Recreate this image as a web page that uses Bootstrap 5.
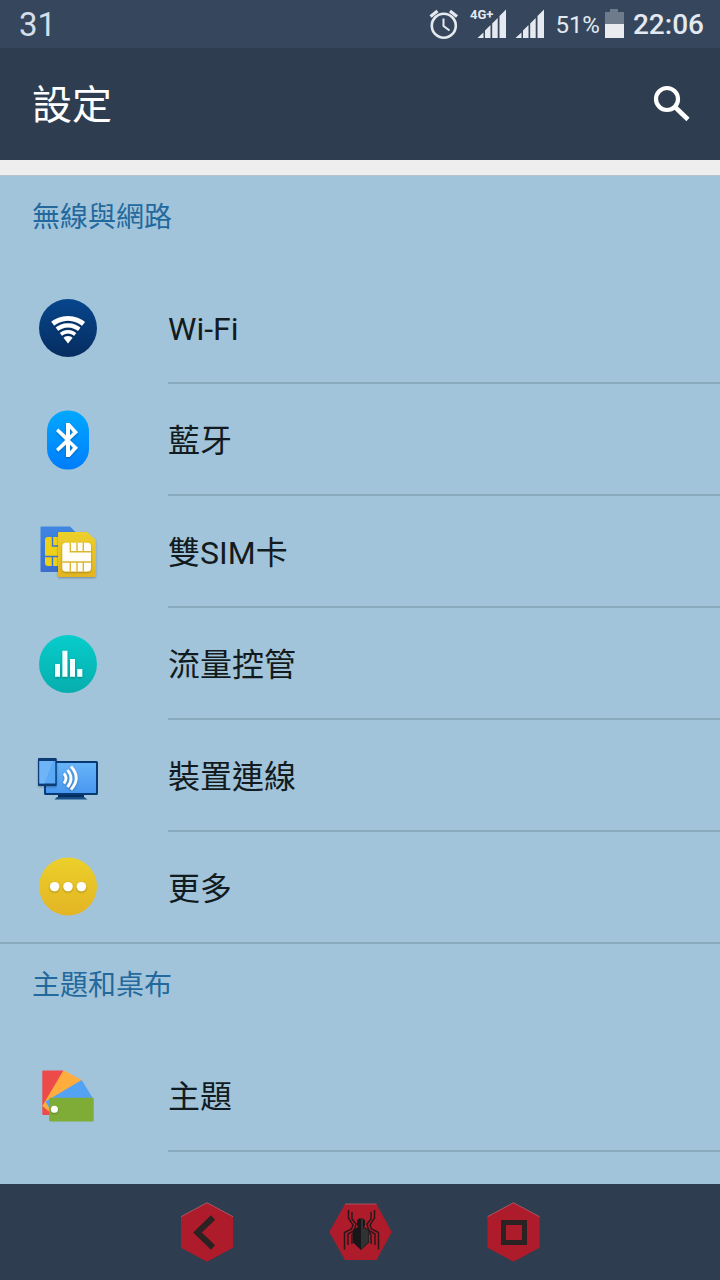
<!DOCTYPE html>
<html lang="zh-Hant">
<head>
<meta charset="utf-8">
<meta name="viewport" content="width=device-width, initial-scale=1">
<title>設定</title>
<link href="https://cdn.jsdelivr.net/npm/bootstrap@5.3.0/dist/css/bootstrap.min.css" rel="stylesheet">
<style>
  body { font-family: Roboto, "Noto Sans CJK TC", sans-serif; background: #a2c4da; color: #121b20; }
  .status-bar { height: 48px; background: #36475d; color: #e3e9f0; padding: 0 16px 0 19px; line-height: 46px; }
  .status-bar span { padding-top: 2px; }
  .status-date { font-size: 33px; color: #d5dee9; }
  .status-percent { font-size: 24px; margin-left: 10px; margin-right: 5px; }
  .status-time { font-size: 28px; font-weight: 500; margin-left: 8px; }
  .app-bar { height: 112px; background: #2e3d4f; color: #fff; padding: 0 24px 0 32px; }
  .app-bar h1 { font-size: 40px; line-height: 48px; font-weight: 400; padding-top: 4px; }
  .top-strip { height: 16px; background: #eee; border-bottom: 1px solid #b9c3c9; }
  .section-title { height: 96px; padding: 22px 32px 0; font-size: 28px; line-height: 40px; font-weight: 400; color: #23699d; }
  .setting-row { height: 112px; padding-left: 36px; gap: 68px; color: inherit; font-size: 32px; line-height: 48px; }
  .setting-label { height: 112px; padding-top: 4px; border-bottom: 2px solid #8aabbd; }
  .section-block + .section-block { border-top: 2px solid #8aabbd; }
  .section-block:not(:last-child) > a:last-child,
  .section-block:not(:last-child) > a:last-child .setting-label { height: 110px; border-bottom: 0; }
  .nav-keys { height: 96px; gap: 90px; background: #2e3d4f; }
</style>
</head>
<body class="min-vh-100 d-flex flex-column">
<svg width="0" height="0" class="position-absolute" aria-hidden="true">
  <defs>
    <linearGradient id="navy" x2="0" y2="1"><stop stop-color="#07468c"/><stop offset="1" stop-color="#062d60"/></linearGradient>
    <linearGradient id="azure" x2="0" y2="1"><stop stop-color="#00a8ff"/><stop offset="1" stop-color="#007dfc"/></linearGradient>
    <linearGradient id="gold" x2="0" y2="1"><stop stop-color="#ecd02b"/><stop offset="1" stop-color="#e3b423"/></linearGradient>
    <linearGradient id="teal" x2="0" y2="1"><stop stop-color="#07cdcb"/><stop offset="1" stop-color="#06aead"/></linearGradient>
    <linearGradient id="screen" x2="0" y2="1"><stop stop-color="#69b5f8"/><stop offset="1" stop-color="#4797f0"/></linearGradient>
    <linearGradient id="simblue" x2="0" y2="1"><stop stop-color="#3f86e2"/><stop offset="1" stop-color="#3a6fce"/></linearGradient>
    <filter id="drop" x="-30%" y="-30%" width="160%" height="160%"><feDropShadow dx="0" dy="1" stdDeviation="1" flood-opacity=".3"/></filter>
    <clipPath id="fan"><path d="M32 47.500 14.500 24.700 14 14H50V24.700Z"/></clipPath>
  </defs>
</svg>

<div class="status-bar d-flex align-items-center justify-content-between">
  <span class="status-date">31</span>
  <div class="d-flex align-items-center">
    <svg width="120" height="48" viewBox="426 0 120 48" role="img" aria-label="鬧鐘、4G+ 訊號">
      <g fill="none" stroke="#e6eaf0" stroke-width="2.600"><circle cx="444.800" cy="25.700" r="12"/><path d="M444.500 18.500V26l6 4.500" stroke-width="2"/><path d="m431.500 16.500 7-5.500m19.500 5.500-7-5.500" stroke-width="3.200"/></g>
      <path fill="#e6eaf0" d="M478.500 38l6-5.500V38zM486 38v-7.500l5.500-5.500V38zM493.200 38V23.500l5.500-5.500V38zM500.500 38V16l6.500-6.500V38zM516.500 38l6-5.500V38zM524 38v-7.500l5.500-5.500V38zM531.200 38V23.500l5.500-5.500V38zM538.500 38V16l6.500-6.500V38z"/>
      <text x="471" y="18.500" fill="#e6eaf0" font-family="Roboto, sans-serif" font-weight="700" font-size="13">4G+</text>
    </svg>
    <span class="status-percent">51%</span>
    <svg width="20" height="48" viewBox="0 0 20 48" role="img" aria-label="電池"><path fill="#6d7b8a" d="M0 12h5V9h8v3h6v12H0z"/><path fill="#e9ebee" d="M0 24h19v14H0z"/></svg>
    <span class="status-time">22:06</span>
  </div>
</div>

<header class="app-bar d-flex align-items-center justify-content-between">
  <h1 class="m-0">設定</h1>
  <button type="button" class="btn border-0 p-0 text-white" aria-label="搜尋">
    <svg class="d-block" width="48" height="48" viewBox="0 0 48 48" fill="none" stroke="currentColor"><circle cx="19" cy="19" r="11" stroke-width="4.200"/><path d="m27 27 13 12.500" stroke-width="4.600"/></svg>
  </button>
</header>
<div class="top-strip"></div>

<main class="flex-grow-1">
  <section class="section-block">
    <h2 class="section-title m-0">無線與網路</h2>
    <a href="#wifi" class="setting-row d-flex align-items-center text-decoration-none">
      <svg class="flex-shrink-0" width="64" height="64" viewBox="0 0 64 64" aria-hidden="true"><circle cx="32" cy="32" r="29" fill="url(#navy)"/><g filter="url(#drop)"><g clip-path="url(#fan)" fill="none" stroke="#fff"><circle cx="32" cy="47" r="24.700" stroke-width="4.800"/><circle cx="32" cy="47" r="17.700" stroke-width="4.200"/><circle cx="32" cy="47" r="11.200" stroke-width="3.600"/><circle cx="32" cy="47" r="7" fill="#fff" stroke="none"/></g></g></svg>
      <span class="setting-label flex-grow-1 d-flex align-items-center">Wi-Fi</span>
    </a>
    <a href="#bluetooth" class="setting-row d-flex align-items-center text-decoration-none">
      <svg class="flex-shrink-0" width="64" height="64" viewBox="0 0 64 64" aria-hidden="true"><rect x="11" y="2.500" width="42" height="59" rx="20.500" fill="url(#azure)"/><path d="M30 15h3.500L42 24.300 33.800 32 42 39.700 33.500 49H30V36.500L22.300 43.500 20 41l9.300-9L20 23l2.300-2.500L30 27.500ZM34 20.500V27.500L37 24.300ZM34 36.500V43.500L37 39.700Z" fill="#fff" fill-rule="evenodd" filter="url(#drop)"/></svg>
      <span class="setting-label flex-grow-1 d-flex align-items-center">藍牙</span>
    </a>
    <a href="#sim" class="setting-row d-flex align-items-center text-decoration-none">
      <svg class="flex-shrink-0" width="64" height="64" viewBox="0 0 64 64" aria-hidden="true">
        <path d="M5.500 6.500H34l7 7v38.500H5.500a1 1 0 0 1-1-1V7.500a1 1 0 0 1 1-1z" fill="url(#simblue)"/>
        <rect x="9" y="17" width="24" height="29" rx="3" fill="#ecd117"/><path d="M16.500 17v9h6M9 36.500h14M16.500 36.500V46" fill="none" stroke="#3a74cf" stroke-width="1.400"/>
        <path d="M23 12h28l8.700 8v36a1 1 0 0 1-1 1H23a1 1 0 0 1-1-1V13a1 1 0 0 1 1-1z" fill="url(#gold)" filter="url(#drop)"/>
        <rect x="26.300" y="22.700" width="28.700" height="28.700" rx="3.500" fill="#fffdf5" filter="url(#drop)"/>
        <path d="M34.300 22.700v9H55M41 22.700v9M47.300 22.700v9M26.300 42H55M34.300 42v9.400M41 42v9.400M47.300 42v9.400" fill="none" stroke="#dcb733" stroke-width="1.400"/>
      </svg>
      <span class="setting-label flex-grow-1 d-flex align-items-center">雙SIM卡</span>
    </a>
    <a href="#data" class="setting-row d-flex align-items-center text-decoration-none">
      <svg class="flex-shrink-0" width="64" height="64" viewBox="0 0 64 64" aria-hidden="true"><circle cx="32" cy="32" r="29" fill="url(#teal)"/><path fill="#f4ffff" filter="url(#drop)" d="M19 32h5v12.700h-5zM26.400 18.700h5v26h-5zM34 27h5v17.700h-5zM41.300 37h5v7.700h-5z"/></svg>
      <span class="setting-label flex-grow-1 d-flex align-items-center">流量控管</span>
    </a>
    <a href="#devices" class="setting-row d-flex align-items-center text-decoration-none">
      <svg class="flex-shrink-0" width="64" height="64" viewBox="0 0 64 64" aria-hidden="true">
        <path d="M22 50h26v3.500H22z" fill="#062d60"/><path d="M21 53h27l3.500 2.500h-33z" fill="#164e86"/>
        <rect x="9" y="18" width="52" height="32" rx=".5" fill="url(#screen)" stroke="#073a75" stroke-width="2"/>
        <g fill="none" stroke="#fff" stroke-width="2.700" filter="url(#drop)"><path d="M28 29.500q4 4.500 0 10M31.500 26q7 8.500 0 17M35 22.500q10.500 11.500 0 23"/></g>
        <g filter="url(#drop)"><rect x="2" y="14" width="18.700" height="28" rx="1" fill="#073a75"/></g><path fill="#5aa9f4" d="M3.300 17h16v22.500h-16z"/><path fill="#7bbcf8" d="M3.300 17h14l-9 22.500h-5z" opacity=".6"/>
      </svg>
      <span class="setting-label flex-grow-1 d-flex align-items-center">裝置連線</span>
    </a>
    <a href="#more" class="setting-row d-flex align-items-center text-decoration-none">
      <svg class="flex-shrink-0" width="64" height="64" viewBox="0 0 64 64" aria-hidden="true"><circle cx="32" cy="31.500" r="29" fill="url(#gold)"/><g fill="#fff" filter="url(#drop)"><circle cx="18.600" cy="31.600" r="4.700"/><circle cx="32" cy="31.600" r="4.700"/><circle cx="45.400" cy="31.600" r="4.700"/></g></svg>
      <span class="setting-label flex-grow-1 d-flex align-items-center">更多</span>
    </a>
  </section>
  <section class="section-block">
    <h2 class="section-title m-0">主題和桌布</h2>
    <a href="#theme" class="setting-row d-flex align-items-center text-decoration-none">
      <svg class="flex-shrink-0" width="64" height="64" viewBox="0 0 64 64" aria-hidden="true">
        <path d="M7.300 6.500h20V51h-20a1 1 0 0 1-1-1V7.500a1 1 0 0 1 1-1z" fill="#ec4b49"/>
        <path d="M27.500 6.300 45.700 16 16 50 6.300 42z" fill="#ffad3d"/>
        <path d="M45.700 16 57 34.500 15 47 9.500 37.500z" fill="#54a2f3"/>
        <rect x="13.200" y="33.700" width="44.500" height="23.700" rx="1" fill="#7fac36"/>
        <circle cx="18.400" cy="45.300" r="3.500" fill="#fff" filter="url(#drop)"/>
      </svg>
      <span class="setting-label flex-grow-1 d-flex align-items-center">主題</span>
    </a>
  </section>
</main>

<nav class="nav-keys d-flex align-items-center justify-content-center" aria-label="導覽列">
  <button type="button" class="btn border-0 p-0" aria-label="返回"><svg class="d-block" width="64" height="64" viewBox="0 0 64 64"><path d="m33 2.700 26 14v31l-26 14-26-14v-31z" fill="#ae1c2b"/><path d="m7 16.700 26-14 26 14" fill="none" stroke="#b6616e" stroke-width=".8"/><path d="m39 17.500-15.500 15 15.500 15" fill="none" stroke="#2b2223" stroke-width="6"/></svg></button>
  <button type="button" class="btn border-0 p-0" aria-label="主畫面"><svg class="d-block" width="64" height="64" viewBox="0 0 64 64"><path d="M1.300 32 17 4h31.500L63.700 32 48.500 60H17z" fill="#ae1c2b"/><path d="M17 4h31.500" stroke="#b6616e" stroke-width=".8"/>
    <g fill="none" stroke="#2b171a" stroke-width="1.500"><path d="M20.500 10v8l4.500 7-1.500 4-7 3.500v17M24 12v7l4 5-1 4-1.500 3-5.500 3v11M27.500 30l-3.500 5v9M46.500 10v8l-4.500 7 1.500 4 7 3.500v17M43 12v7l-4 5 1 4 1.500 3 5.500 3v11M39.500 30l3.500 5v9"/></g>
    <path d="M31 18.500h4l2 2v4.500l-1 2 5 3v12.500L33 50l-8-7.500V30l5-3-1-2v-4.500z" fill="#171719"/><path d="M33 19v30.500l7.500-7.500V30.500L35 27.500v-8.500z" fill="#303133"/></svg></button>
  <button type="button" class="btn border-0 p-0" aria-label="最近使用"><svg class="d-block" width="64" height="64" viewBox="0 0 64 64"><path d="m31.500 2.700 26 14v31l-26 14-26-14v-31z" fill="#ae1c2b"/><path d="m5.500 16.700 26-14 26 14" fill="none" stroke="#b6616e" stroke-width=".8"/><path d="M21.500 22.500h21v20h-21z" fill="none" stroke="#2b2223" stroke-width="5"/></svg></button>
</nav>
<script src="https://cdn.jsdelivr.net/npm/bootstrap@5.3.0/dist/js/bootstrap.bundle.min.js"></script>
</body>
</html>
